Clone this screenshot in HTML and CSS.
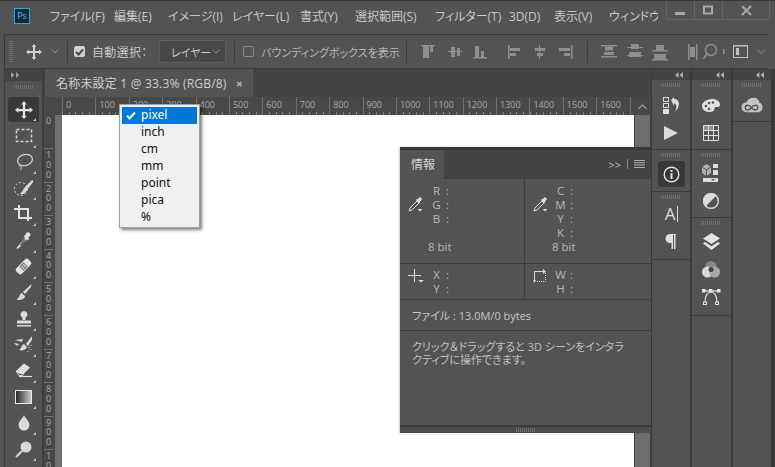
FILE: index.html
```html
<!DOCTYPE html>
<html lang="ja">
<head>
  <meta charset="UTF-8">
  <title>Photoshop</title>
  <link rel="stylesheet" href="styles.css">
</head>
<body>
<div class="app">

  <!-- title + menu -->
  <header class="titlebar">
    <div class="ps-logo">Ps</div>
    <nav class="menu">
      <span class="m1">ファイル(F)</span>
      <span class="m2">編集(E)</span>
      <span class="m3">イメージ(I)</span>
      <span class="m4">レイヤー(L)</span>
      <span class="m5">書式(Y)</span>
      <span class="m6">選択範囲(S)</span>
      <span class="m7">フィルター(T)</span>
      <span class="m8">3D(D)</span>
      <span class="m9">表示(V)</span>
      <span class="m10">ウィンドウ(W)</span>
    </nav>
    <div class="winctl">
      <div class="winbtn"><svg width="11" height="11"><rect x="0" y="7" width="10" height="3" fill="#a8a8a8"/></svg></div>
      <div class="winbtn"><svg width="11" height="11"><rect x="1" y="1.500" width="8" height="7" fill="none" stroke="#a8a8a8" stroke-width="2"/></svg></div>
      <div class="winbtn wide"><svg width="11" height="11"><path d="M1 1l9 9M10 1l-9 9" stroke="#a8a8a8" stroke-width="2"/></svg></div>
    </div>
  </header>

  <!-- options bar -->
  <div class="options">
    <div class="grip-v"></div>
    <svg class="opt-move" width="16" height="16" viewBox="0 0 16 16"><path d="M8 0l2.500 3H9v4h4V5.500L16 8l-3 2.500V9H9v4h1.500L8 16l-2.500-3H7V9H3v1.500L0 8l3-2.500V7h4V3H5.500z" fill="#d0d0d0"/></svg>
    <svg class="chev opt-chev" width="8" height="5"><path d="M.5.500L4 4 7.500.500" fill="none" stroke="#909090"/></svg>
    <div class="opt-sep s1"></div>
    <div class="check on"><svg width="9" height="8"><path d="M1 4l2.500 2.500L8 1.500" fill="none" stroke="#4a4a4a" stroke-width="2"/></svg></div>
    <span class="opt-label auto">自動選択：</span>
    <div class="opt-select"><span>レイヤー</span><svg class="chev" width="8" height="5"><path d="M.5.500L4 4 7.500.500" fill="none" stroke="#909090"/></svg></div>
    <div class="opt-sep s2"></div>
    <div class="check"></div>
    <span class="opt-label bbox">バウンディングボックスを表示</span>
    <div class="opt-sep s3"></div>
    <svg class="strip" width="152" height="20" viewBox="0 0 152 20" fill="#8e8e8e">
      <rect x="0" y="3" width="14" height="1.500"/><rect x="2" y="3" width="6" height="13"/><rect x="9" y="3" width="3" height="7"/>
      <rect x="27" y="9" width="14" height="1"/><rect x="30" y="5" width="4" height="10"/><rect x="36" y="6" width="3" height="8"/>
      <rect x="52" y="15" width="14" height="1.500"/><rect x="54" y="4" width="4" height="11"/><rect x="60" y="9" width="3" height="6"/>
      <rect x="87" y="3" width="1.500" height="14"/><rect x="89" y="6" width="10" height="3"/><rect x="89" y="11" width="6" height="3" />
      <rect x="118" y="3" width="1" height="14"/><rect x="114" y="6" width="10" height="3"/><rect x="116" y="11" width="6" height="3"/>
      <rect x="150" y="3" width="1.500" height="14"/><rect x="138" y="6" width="11" height="3"/><rect x="143" y="11" width="6" height="3"/>
    </svg>
    <div class="opt-sep s4"></div>
    <svg class="strip2" width="165" height="22" viewBox="0 0 165 22" fill="#8e8e8e">
      <rect x="0" y="4" width="16" height="1.500"/><rect x="4" y="5.500" width="8" height="4"/><rect x="0" y="15" width="16" height="1.500"/><rect x="3" y="11" width="10" height="3"/>
      <rect x="26" y="6" width="16" height="1"/><rect x="30" y="3" width="8" height="5"/><rect x="26" y="14" width="16" height="1"/><rect x="28" y="11" width="12" height="5"/>
      <rect x="51" y="9" width="16" height="1.500"/><rect x="55" y="4" width="8" height="5"/><rect x="51" y="18" width="16" height="1.500"/><rect x="53" y="13" width="12" height="5"/>
      <rect x="87" y="3" width="1.500" height="16"/><rect x="89" y="6" width="5" height="10" /><rect x="95" y="3" width="1.500" height="16"/>
      <circle cx="110" cy="9" r="5.500" fill="none" stroke="#8e8e8e" stroke-width="1.500"/><path d="M106 13l-4 5" stroke="#8e8e8e" stroke-width="1.500"/>
      <rect x="122" y="8" width="1.500" height="5"/>
      <rect x="132.500" y="4.500" width="14" height="12" fill="none" stroke="#c0c0c0"/><rect x="135" y="7" width="3" height="7" fill="#c0c0c0"/><rect x="132" y="4" width="15" height="1.500" fill="#c0c0c0"/>
      <path d="M156.500 9L160 12.500 163.500 9" fill="none" stroke="#909090"/>
    </svg>
  </div>

  <!-- left tools -->
  <aside class="tools">
    <div class="collapse left">
      <svg width="9" height="6" fill="#a0a0a0"><path d="M0 0l3.500 3L0 6zM5 0l3.500 3L5 6z"/></svg>
    </div>
    <div class="grip-h"></div>
    <div class="tool active"><svg width="18" height="18" viewBox="0 0 16 16"><path d="M8 0l2.500 3H9v4h4V5.500L16 8l-3 2.500V9H9v4h1.500L8 16l-2.500-3H7V9H3v1.500L0 8l3-2.500V7h4V3H5.500z" fill="#e4e4e4"/></svg></div>
    <div class="tool"><svg width="18" height="16"><rect x="1.500" y="1.500" width="15" height="12" fill="none" stroke="#d8d8d8" stroke-width="1.500" stroke-dasharray="3 2"/></svg></div>
    <div class="tool"><svg width="18" height="18"><ellipse cx="10" cy="7" rx="7.500" ry="5.500" fill="none" stroke="#d0d0d0" stroke-width="1.300" transform="rotate(-15 10 7)"/><path d="M5 11c-2 2 0 3 1 2s0 4-1 4" fill="none" stroke="#d0d0d0"/></svg></div>
    <div class="tool"><svg width="19" height="18"><circle cx="7" cy="10" r="6.500" fill="none" stroke="#d0d0d0" stroke-dasharray="2 2"/><path d="M18 1l-7 7-2 3c-1 3-3 3-3 4 3 1 6-1 7-4l7-9z" fill="#d8d8d8"/></svg></div>
    <div class="tool"><svg width="19" height="19" fill="none" stroke="#e0e0e0" stroke-width="2"><path d="M0 4h14v12M5 0v13h13"/></svg></div>
    <div class="tool"><svg width="16" height="18"><path d="M9 3l2-2.500c1.500-1 4 1 3.500 3L12 6l1 1-1.500 1.500-1-1-6 7-3 2.500-1-1L3 13l6-7-1-1.500z" fill="#e0e0e0"/><path d="M8.500 7l-4.500 6 1 1 4.500-6z" fill="#535353"/></svg></div>
    <div class="tool"><svg width="19" height="19"><g transform="rotate(-45 9.500 9.500)"><rect x="1" y="5.500" width="17" height="8" rx="2.500" fill="#e4e4e4"/><rect x="6.500" y="6.500" width="6" height="6" fill="#777"/><path d="M8 7v5M11 7v5M7 8.500h5M7 10.500h5" stroke="#e4e4e4" stroke-width=".7"/></g></svg></div>
    <div class="tool"><svg width="16" height="17"><path d="M15.500 0L7 8l2 2 6-7zM6 9c-3 1-1.500 4-5.500 6.500 3 1.500 8 0 8.500-3.500z" fill="#d8d8d8"/></svg></div>
    <div class="tool"><svg width="16" height="16" fill="#dcdcdc"><circle cx="8" cy="3.500" r="3.300"/><rect x="6.500" y="6" width="3" height="3"/><path d="M1 9.500h14v3H1z"/><rect x="1" y="14" width="14" height="1.500"/></svg></div>
    <div class="tool"><svg width="19" height="18"><path d="M18 0l-6 8 2 2 4-6zM10 8c-3 1-2 4-5 6 3 1 7 0 8-3zM1 4l8-1-1 3zM0 7l5 1-2 2z" fill="#d8d8d8"/><path d="M15 11v1M17 9v1M14 15v1M17 13v1" stroke="#d8d8d8"/></svg></div>
    <div class="tool"><svg width="17" height="15"><path d="M9 .500l6 4-6 6H5L1 8z" fill="#e0e0e0"/><path d="M1 8l4 2.500h4l-1.500 2H4z" fill="none" stroke="#e0e0e0"/><path d="M4 13.500h13" stroke="#e0e0e0" stroke-width="1.200"/></svg></div>
    <div class="tool"><div class="grad-swatch"></div></div>
    <div class="tool"><svg width="12" height="16"><path d="M6 0c1 3 5.500 6 5.500 10a5.500 5.500 0 0 1-11 0C.5 6 5 3 6 0z" fill="#dcdcdc"/></svg></div>
    <div class="tool"><svg width="17" height="17"><circle cx="11" cy="6" r="5.500" fill="#d8d8d8"/><path d="M7 10l-6 6" stroke="#d8d8d8" stroke-width="2"/></svg></div>
  </aside>

  <!-- document -->
  <main class="doc">
    <div class="tabs">
      <div class="tab"><span>名称未設定 1 @ 33.3% (RGB/8)</span><i class="tab-x">✖</i></div>
    </div>
    <div class="hruler-row">
      <div class="ruler-corner"></div>
      <div class="hruler">
        <span>0</span><span>100</span><span>200</span><span>300</span><span>400</span><span>500</span><span>600</span><span>700</span><span>800</span><span>900</span><span>1000</span><span>1100</span><span>1200</span><span>1300</span><span>1400</span><span>1500</span><span>1600</span><span>1</span>
      </div>
      <div class="scroll-up"><svg width="9" height="5"><path d="M.5 4.500L4.500 1 8.500 4.500" fill="none" stroke="#9a9a9a" stroke-width="1.200"/></svg></div>
    </div>
    <div class="doc-body">
      <div class="vruler">
        <span>0</span><span>100</span><span>200</span><span>300</span><span>400</span><span>500</span><span>600</span><span>700</span><span>800</span><span>900</span><span>100</span>
      </div>
      <div class="canvas"></div>
      <div class="scrollbar"><div class="thumb"></div></div>
    </div>
  </main>

  <!-- docked panels -->
  <aside class="docks">
    <div class="dock">
      <div class="collapse"><svg width="8" height="6" fill="#b0b0b0"><path d="M3.500 0L0 3l3.500 3zM8 0L4.500 3 8 6z"/></svg></div>
      <div class="grp h69">
        <div class="grip-h"></div>
        <div class="dock-icon i1"><svg width="16" height="17" fill="#dcdcdc"><rect x=".5" y=".5" width="5" height="4" fill="none" stroke="#dcdcdc"/><rect x=".5" y="6.500" width="5" height="4" fill="none" stroke="#dcdcdc"/><rect y="12" width="6" height="5"/><path d="M8 3l3-3v2c3 0 5 2 5 5s-2 6-4 8c1-3 2-5 1-7-.5-1-1-1.500-2-1.500V9z"/></svg></div>
        <div class="dock-icon"><svg width="14" height="14"><path d="M0 0l14 7-14 7z" fill="#dcdcdc"/></svg></div>
      </div>
      <div class="grp h42">
        <div class="grip-h"></div>
        <div class="dock-icon on"><svg width="17" height="17" fill="none" stroke="#e4e4e4"><circle cx="8.500" cy="8.500" r="7.300" stroke-width="1.400"/><path d="M8.500 7v6" stroke-width="2"/><path d="M8.500 4v2" stroke-width="2"/></svg></div>
      </div>
      <div class="grp h68">
        <div class="grip-h"></div>
        <div class="dock-icon glyph">A<b></b></div>
        <div class="dock-icon"><svg width="12" height="15" fill="#e0e0e0"><path d="M11 0H5a4.500 4.500 0 0 0 0 9h1.500v6h1.500V1h1v14h1.500V1z"/></svg></div>
      </div>
      <div class="grp rest"></div>
    </div>

    <div class="dock">
      <div class="collapse"><svg width="8" height="6" fill="#b0b0b0"><path d="M3.500 0L0 3l3.500 3zM8 0L4.500 3 8 6z"/></svg></div>
      <div class="grp h69">
        <div class="grip-h"></div>
        <div class="dock-icon i1"><svg width="18" height="13"><path d="M10 0c5 0 8 2.500 8 5.500S16 8 14 8s-1 2-2 3.500S7 13.500 4 12.500 0 9 0 6.500 4 0 10 0z" fill="#e0e0e0"/><g fill="#535353"><circle cx="4" cy="7" r="1.300"/><circle cx="7" cy="4" r="1.300"/><circle cx="11" cy="3.500" r="1.300"/><circle cx="7" cy="10" r="1.300"/></g></svg></div>
        <div class="dock-icon"><svg width="16" height="16" fill="none" stroke="#e0e0e0"><path d="M.5.500h15v15H.5zM.5 5.500h15M.5 10.500h15M5.500.500v15M10.500.500v15"/><rect x="1" y="1" width="4" height="4" fill="#909090" stroke="none"/><rect x="6" y="1" width="4" height="4" fill="#909090" stroke="none"/></svg></div>
      </div>
      <div class="grp h68b">
        <div class="grip-h"></div>
        <div class="dock-icon cube"><svg width="18" height="18" fill="#dcdcdc"><path d="M0 3l4.500-3L9 3v6l-4.500 3L0 9z" fill="#b0b0b0"/><path d="M0 3l4.500 3L9 3M4.500 6v6" stroke="#535353" fill="none"/><rect x="11" y="0" width="5" height="4"/><rect x="11" y="6" width="5" height="5"/><rect x="1" y="14" width="15" height="4"/><path d="M9 15h4l-2 2z" fill="#535353"/></svg></div>
        <div class="dock-icon"><svg width="16" height="16"><circle cx="8" cy="8" r="8" fill="#dcdcdc"/><path d="M13.700 2.300a8 8 0 0 1-11.400 11.400z" fill="#535353"/><circle cx="8" cy="8" r="7.300" fill="none" stroke="#dcdcdc" stroke-width="1.400"/></svg></div>
      </div>
      <div class="grp h97">
        <div class="grip-h"></div>
        <div class="dock-icon i2"><svg width="17" height="17" fill="#e4e4e4"><path d="M8.500 0L17 5.500 8.500 11 0 5.500z"/><path d="M2 9l6.500 4.200L15 9l2 1.500L8.500 17 0 10.500z"/></svg></div>
        <div class="dock-icon"><svg width="18" height="17"><circle cx="9" cy="5.500" r="5.500" fill="#8a8a8a"/><circle cx="5.500" cy="11" r="5.500" fill="#d8d8d8"/><circle cx="12.500" cy="11" r="5.500" fill="#a8a8a8"/><circle cx="9" cy="8.500" r="2.500" fill="#444"/></svg></div>
        <div class="dock-icon"><svg width="20" height="16" fill="none" stroke="#e4e4e4"><path d="M4 2h12" stroke-width="1.200"/><path d="M4 13C4 6 7 3 10 3s6 3 6 10" stroke-width="1.200"/><rect x="1" y="0" width="3.500" height="3.500" fill="#e4e4e4" stroke="none"/><rect x="8" y="0" width="3.500" height="3.500" fill="#e4e4e4" stroke="none"/><rect x="16" y="0" width="3.500" height="3.500" fill="#e4e4e4" stroke="none"/><rect x="2.500" y="13" width="3" height="2.500"/><rect x="14.500" y="13" width="3" height="2.500"/></svg></div>
      </div>
      <div class="grp rest"></div>
    </div>

    <div class="dock">
      <div class="collapse"><svg width="8" height="6" fill="#b0b0b0"><path d="M3.500 0L0 3l3.500 3zM8 0L4.500 3 8 6z"/></svg></div>
      <div class="grp h41">
        <div class="grip-h"></div>
        <div class="dock-icon cc"><svg width="22" height="16" viewBox="0 0 21 15" fill="none"><path d="M6 14.500C2 14.500.5 12 .5 9.500S2.500 5 5 5C6 2 9 .5 12 .5c3.500 0 5 2 5.500 4.500 2 .5 3 2.500 3 4.500 0 3-2 5-4.500 5z" fill="#c4c4c4"/><path d="M4 10c0-3 4-3 6 0s6 3 6 0-4-3-6 0-6 3-6 0z" stroke="#535353" stroke-width="1.300"/></svg></div>
      </div>
      <div class="grp rest"></div>
    </div>
  </aside>

  <!-- floating info panel -->
  <section class="info">
    <div class="info-head">
      <div class="info-tab">情報</div>
      <div class="info-actions">
        <span>&gt;&gt;</span>
        <i class="bar"></i>
        <svg width="11" height="8" fill="#b0b0b0"><path d="M0 0h11v1H0zM0 2.300h11v1H0zM0 4.600h11v1H0zM0 6.900h11v1H0z"/></svg>
      </div>
    </div>
    <div class="info-row tall">
      <div class="info-cell">
        <svg class="ico" width="15" height="15"><path d="M9 4L2 11l-1 3 3-1 7-7z" fill="none" stroke="#dcdcdc"/><path d="M8 3l1-1 1 0 1-1.500c1.500-1 3.500 1 2.500 2.500L12 4.500v1l-1 1z" fill="#dcdcdc"/><path d="M9.500 12h5l-2.500 2.500z" fill="#dcdcdc"/></svg>
        <div class="vals"><div><span>R</span>:</div><div><span>G</span>:</div><div><span>B</span>:</div><div class="blank"></div><div class="bit">8 bit</div></div>
      </div>
      <div class="info-cell">
        <svg class="ico" width="15" height="15"><path d="M9 4L2 11l-1 3 3-1 7-7z" fill="none" stroke="#dcdcdc"/><path d="M8 3l1-1 1 0 1-1.500c1.500-1 3.500 1 2.500 2.500L12 4.500v1l-1 1z" fill="#dcdcdc"/><path d="M9.500 12h5l-2.500 2.500z" fill="#dcdcdc"/></svg>
        <div class="vals"><div><span>C</span>:</div><div><span>M</span>:</div><div><span>Y</span>:</div><div><span>K</span>:</div><div class="bit">8 bit</div></div>
      </div>
    </div>
    <div class="info-row short">
      <div class="info-cell">
        <svg class="ico" width="16" height="15"><path d="M6.500 0v13M0 6.500h13" stroke="#dcdcdc"/><path d="M10 11h6l-3 2.500z" fill="#dcdcdc"/></svg>
        <div class="vals"><div><span>X</span>:</div><div><span>Y</span>:</div></div>
      </div>
      <div class="info-cell">
        <svg class="ico" width="14" height="14"><path d="M1.500 12V2.500H11" fill="none" stroke="#dcdcdc"/><path d="M12.500 4v8.500H3" fill="none" stroke="#dcdcdc" stroke-dasharray="1 1"/><path d="M10 0l3 2.500-3 2.500zM0 11l1.500 3 1.500-3z" fill="#dcdcdc"/></svg>
        <div class="vals"><div><span>W</span>:</div><div><span>H</span>:</div></div>
      </div>
    </div>
    <div class="info-file">ファイル : 13.0M/0 bytes</div>
    <div class="info-help">クリック＆ドラッグすると 3D シーンをインタラクティブに操作できます。</div>
    <div class="info-foot"><div class="grip-h"></div></div>
  </section>

  <!-- ruler units menu -->
  <ul class="units">
    <li class="sel"><svg width="10" height="9"><path d="M1 4.500l2.500 3L9 1.500" fill="none" stroke="#fff" stroke-width="2"/></svg>pixel</li>
    <li>inch</li>
    <li>cm</li>
    <li>mm</li>
    <li>point</li>
    <li>pica</li>
    <li>%</li>
  </ul>
</div>
</body>
</html>
```

FILE: styles.css
```css
* {
  box-sizing: border-box;
}

html, body {
  margin: 0;
  height: 100%;
  overflow: hidden;
}

body {
  font-family: "Open Sans", "Noto Sans CJK JP", sans-serif;
  font-size: 12px;
  font-feature-settings: "palt";
  color: #c8c8c8;
  background: #535353;
}

svg {
  display: block;
  flex: none;
}

.app {
  position: relative;
  width: 775px;
  height: 467px;
  display: grid;
  grid-template-columns: 44px 607px 1fr;
  grid-template-rows: 34px 35px 1fr;
  overflow: hidden;
}

/* title bar */
.titlebar {
  grid-column: 1 / 4;
  display: flex;
  background: #535353;
  border-top: 1px solid #3a3a3a;
}

.ps-logo {
  width: 16px;
  height: 16px;
  margin: 7px 0 0 14px;
  border: 1px solid #2fa8d8;
  background: #0e2a3a;
  color: #4cc4ee;
  font-size: 9px;
  line-height: 14px;
  text-align: center;
}

.menu {
  display: flex;
  width: 609px;
  margin-left: 20px;
  overflow: hidden;
  line-height: 32px;
  white-space: nowrap;
}

.menu span {
  flex: none;
}

.m1 { width: 64px; }
.m2 { width: 54px; }
.m3 { width: 64px; }
.m4 { width: 68px; }
.m5 { width: 55px; }
.m6 { width: 80px; }
.m7 { width: 74px; }
.m8 { width: 45px; }
.m9 { width: 55px; }
.m10 { width: 49px; overflow: hidden; }

.winctl {
  display: flex;
  height: 19px;
  margin-left: 7px;
  border: 1px solid #666;
  border-top: 0;
  border-radius: 0 0 3px 3px;
}

.winbtn {
  width: 28px;
  display: flex;
  align-items: center;
  justify-content: center;
  border-right: 1px solid #666;
}

.winbtn.wide {
  width: 46px;
  border-right: 0;
}

/* options bar */
.options {
  grid-column: 1 / 4;
  display: flex;
  align-items: center;
  height: 35px;
  background: #535353;
  border-top: 1px solid #3b3b3b;
  border-bottom: 1px solid #3b3b3b;
  border-left: 1px solid #3b3b3b;
  margin-left: 4px;
  margin-right: 7px;
  position: relative;
}

.grip-v {
  width: 4px;
  height: 22px;
  margin-left: 4px;
  background: repeating-linear-gradient(to bottom, #6a6a6a 0 1px, transparent 1px 2px);
}

.opt-move { margin-left: 13px; }
.opt-chev { margin-left: 9px; }

.opt-sep {
  width: 1px;
  height: 22px;
  flex: none;
  background: #3d3d3d;
}

.s1 { margin-left: 8px; margin-right: 6px; }
.s2 { margin-left: 8px; margin-right: 8px; }
.s3 { margin-left: 13px; margin-right: 14px; }
.s4 { margin-left: 14px; margin-right: 13px; }

.check {
  width: 11px;
  height: 11px;
  flex: none;
  border: 1px solid #8a8a8a;
  border-radius: 2px;
  display: flex;
  align-items: center;
  justify-content: center;
}

.check.on {
  background: #d0d0d0;
  border-color: #d0d0d0;
}

.opt-label {
  flex: none;
  white-space: nowrap;
}

.auto {
  width: 60px;
  margin-left: 7px;
  font-size: 12px;
  letter-spacing: .3px;
}

.bbox {
  width: 132px;
  margin-left: 7px;
  font-size: 11px;
  color: #b8b8b8;
}

.opt-select {
  width: 67px;
  height: 23px;
  flex: none;
  margin-left: 7px;
  padding: 0 5px 0 11px;
  display: flex;
  align-items: center;
  justify-content: space-between;
  background: #474747;
  border: 1px solid #5e5e5e;
  border-radius: 3px;
  font-size: 11px;
  white-space: nowrap;
}

/* left tools */
.tools {
  display: flex;
  flex-direction: column;
  align-items: center;
  background: #535353;
  border-left: 1px solid #3d3d3d;
  margin-left: 4px;
  width: 40px;
  border-right: 2px solid #3d3d3d;
}

.collapse {
  width: 100%;
  height: 12px;
  flex: none;
  display: flex;
  align-items: center;
  justify-content: flex-end;
  padding-right: 7px;
  background: #434343;
}

.collapse.left {
  justify-content: flex-start;
  padding-left: 6px;
}

.grip-h {
  width: 20px;
  height: 4px;
  margin: 3px auto 0;
  background: repeating-linear-gradient(to right, #6e6e6e 0 1px, transparent 1px 2px);
}

.tools > .grip-h {
  margin: 4px 0 8px;
}

.tool {
  width: 31px;
  height: 26.100px;
  flex: none;
  position: relative;
  display: flex;
  align-items: center;
  justify-content: center;
}

.tool::after {
  content: "";
  position: absolute;
  right: 3px;
  bottom: 1px;
  border-left: 3px solid transparent;
  border-bottom: 3px solid #c0c0c0;
}

.tool.active {
  background: #383838;
  border-radius: 3px;
  height: 25px;
  margin-bottom: 1.100px;
}

.grad-swatch {
  width: 17px;
  height: 14px;
  border: 1px solid #e8e8e8;
  background: linear-gradient(to right, #2a2a2a, #c8c8c8);
}

/* document area */
.doc {
  display: flex;
  flex-direction: column;
  min-height: 0;
  background: #434343;
}

.tabs {
  height: 28px;
  flex: none;
  padding-left: 1px;
  background: #434343;
}

.tab {
  width: 208px;
  height: 28px;
  display: flex;
  align-items: center;
  padding-left: 11px;
  background: #535353;
  color: #d0d0d0;
  white-space: nowrap;
  font-size: 12px;
  letter-spacing: .2px;
}

.tab-x {
  margin-left: 9px;
  font-size: 8px;
  font-style: normal;
  color: #a8a8a8;
}

.hruler-row {
  height: 18px;
  flex: none;
  display: flex;
}

.ruler-corner {
  width: 18px;
  background: #484848 radial-gradient(#6a6a6a .5px, transparent .6px) 0 0 / 2px 2px;
}

.hruler {
  width: 572px;
  display: flex;
  overflow: hidden;
  background:
    repeating-linear-gradient(to right, #808080 0 1px, transparent 1px 6.680px) 0 100% / 100% 3px no-repeat,
    #484848;
}

.hruler span {
  width: 33.400px;
  flex: none;
  padding: 1px 0 0 3px;
  border-left: 1px solid #707070;
  color: #a8a8a8;
  font-size: 9px;
  line-height: 13px;
}

.scroll-up {
  width: 17px;
  display: flex;
  align-items: center;
  justify-content: center;
  background: #484848;
}

.doc-body {
  flex: 1;
  min-height: 0;
  display: flex;
}

.vruler {
  width: 18px;
  flex: none;
  overflow: hidden;
  background:
    repeating-linear-gradient(to bottom, #808080 0 1px, transparent 1px 6.680px) 100% 0 / 4px 100% no-repeat,
    #484848;
}

.vruler span {
  display: block;
  height: 33.400px;
  padding: 1px 0 0 2px;
  box-sizing: content-box;
  width: 7px;
  color: #a8a8a8;
  font-size: 9px;
  line-height: 9.700px;
  word-break: break-all;
  box-shadow: 0 -1px 0 0 #707070, 11px -1px 0 0 #707070;
}

.vruler span + span {
  height: 32.400px;
}

.canvas {
  width: 572px;
  background: #fff;
}

.scrollbar {
  width: 17px;
  padding: 0 1px;
  background: #3f3f3f;
}

.thumb {
  height: 100%;
  background: #6e6e6e;
}

/* right docks */
.docks {
  display: flex;
  gap: 2px;
  padding: 0 4px 0 1px;
  background: #3a3a3a;
}

.dock {
  flex: 1;
  display: flex;
  flex-direction: column;
  gap: 1px;
}

.dock .collapse {
  height: 11px;
  margin-bottom: -1px;
}

.grp {
  flex: none;
  background: #535353;
}

.h69 { height: 69px; }
.h42 { height: 41px; }
.h68 { height: 67px; }
.h68b { height: 67px; }
.h97 { height: 97px; }
.h41 { height: 41px; }

.grp.rest {
  flex: 1;
}

.dock-icon {
  height: 27.500px;
  display: flex;
  align-items: center;
  justify-content: center;
}

.i1 { margin-top: 5px; }
.i2 { margin-top: 3px; }
.cc { margin-top: 4px; }

.cube { margin-top: 2px; height: 28px; }

.dock-icon.on {
  width: 27px;
  height: 26px;
  margin: 4px auto 0;
  background: #383838;
  border-radius: 3px;
}

.dock-icon.glyph {
  margin-top: 1px;
  font-size: 17px;
  color: #dcdcdc;
}

.glyph b {
  width: 1px;
  height: 16px;
  margin-left: 1px;
  background: #dcdcdc;
}

/* info panel */
.info {
  position: absolute;
  left: 400px;
  top: 147px;
  width: 252px;
  height: 286px;
  display: flex;
  flex-direction: column;
  background: #535353;
  border-top: 3px solid #383838;
  border-right: 1px solid #3a3a3a;
  box-shadow: -1px 0 2px rgba(0, 0, 0, .2);
}

.info-head {
  height: 29px;
  flex: none;
  display: flex;
  justify-content: space-between;
  background: #434343;
  border-bottom: 1px solid #3d3d3d;
}

.info-tab {
  width: 44px;
  height: 29px;
  padding: 5px 0 0 11px;
  background: #535353;
  color: #d4d4d4;
  font-size: 12px;
}

.info-actions {
  display: flex;
  align-items: center;
  gap: 6px;
  padding-right: 6px;
  color: #c0c0c0;
  font-size: 11px;
}

.bar {
  width: 1px;
  height: 10px;
  background: #8a8a8a;
}

.info-row {
  display: grid;
  grid-template-columns: 125px 1fr;
  flex: none;
  border-bottom: 1px solid #3d3d3d;
}

.info-row.tall { height: 85px; }
.info-row.short { height: 36px; }

.info-cell {
  position: relative;
  border-right: 1px solid #3d3d3d;
}

.info-cell:last-child {
  border-right: 0;
}

.ico {
  position: absolute;
  left: 8px;
  top: 18px;
}

.short .ico {
  top: 5px;
}

.vals {
  padding: 5px 0 0 28px;
  line-height: 14px;
  font-size: 11.500px;
  color: #b8b8b8;
}

.vals span {
  display: inline-block;
  width: 13px;
  margin-left: 2px;
  margin-right: 3px;
  text-align: center;
}

.info-cell:last-child .vals {
  padding-left: 27px;
}

.blank {
  height: 14px;
}

.short .vals {
  padding-top: 4px;
}

.info-file {
  height: 31px;
  flex: none;
  padding-left: 12px;
  line-height: 31px;
  border-bottom: 1px solid #3d3d3d;
  color: #c8c8c8;
  font-size: 11px;
}

.info-help {
  flex: 1;
  padding: 9px 22px 0 12px;
  line-height: 13px;
  color: #c0c0c0;
  font-size: 11px;
}

.info-foot {
  height: 8px;
  flex: none;
  background: #4b4b4b;
  border-top: 2px solid #3a3a3a;
}

.info-foot .grip-h {
  margin: 1px auto 0;
}

/* units menu */
.units {
  position: absolute;
  left: 119px;
  top: 104px;
  width: 81px;
  height: 124px;
  margin: 0;
  padding: 2px;
  list-style: none;
  background: #f0f0f0;
  border: 1px solid #a0a0a0;
  box-shadow: 2px 2px 3px rgba(0, 0, 0, .5);
  color: #111;
  font-family: "Noto Sans", sans-serif;
  font-size: 12px;
}

.units li {
  height: 17px;
  padding-left: 19px;
  line-height: 16px;
  position: relative;
}

.units li.sel {
  background: #0078d7;
  color: #fff;
}

.units svg {
  position: absolute;
  left: 4px;
  top: 4px;
}
```
